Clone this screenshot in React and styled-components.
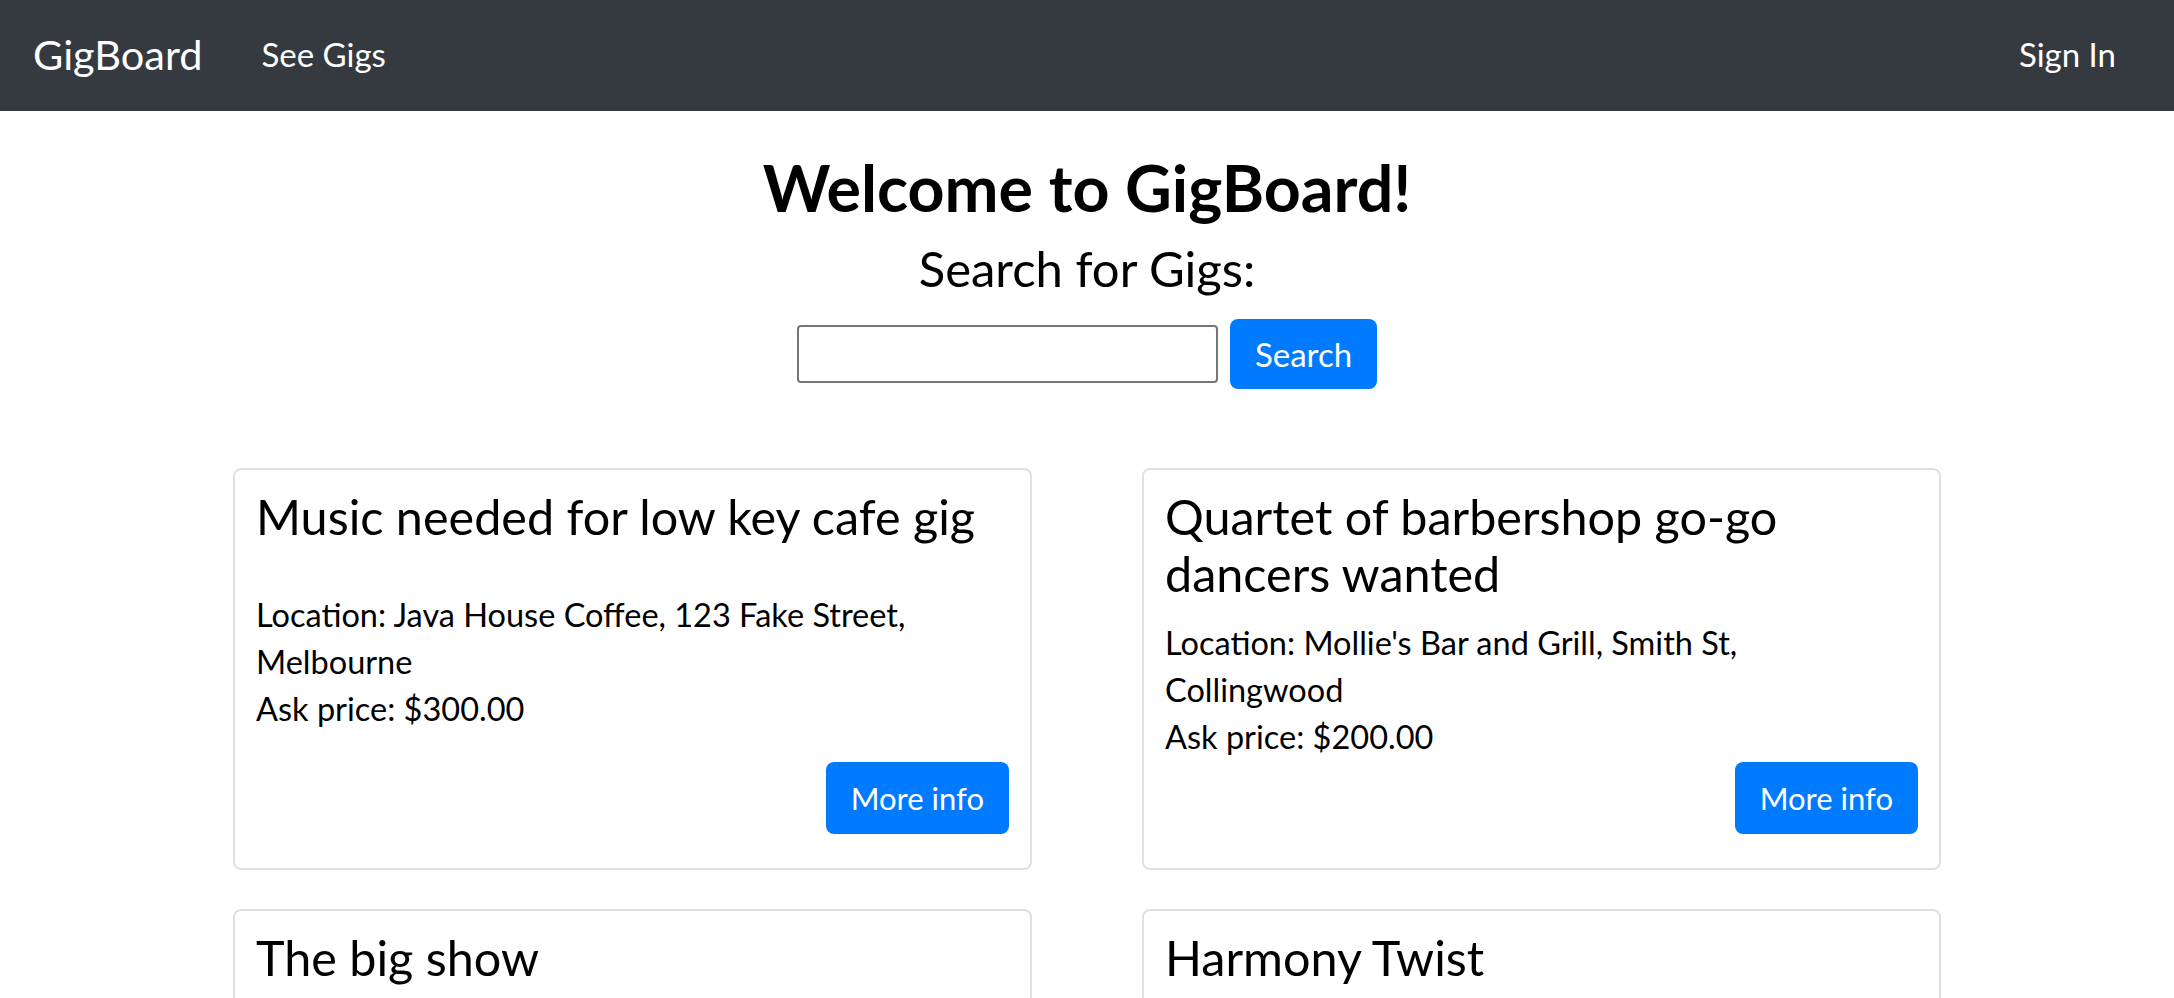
import React from 'react';
import styled, { createGlobalStyle } from 'styled-components';

const GlobalStyle = createGlobalStyle`
  body {
    margin: 0;
    background: #fff;
    font-family: Lato, "Noto Sans", sans-serif;
    color: #000;
  }
`;

const NavBar = styled.nav`
  height: 111px;
  background: #343a40;
  display: flex;
  align-items: center;
  padding: 0 58px 4px 33px;
  box-sizing: border-box;
`;

const Brand = styled.a`
  font-size: 41.5px;
  color: #fff;
  margin-right: 59px;
  text-decoration: none;
`;

const NavLink = styled.a`
  font-size: 33px;
  color: #fff;
  text-decoration: none;
  margin-left: ${props => (props.right ? 'auto' : '0')};
`;

const Hero = styled.header`
  display: flex;
  flex-direction: column;
  align-items: center;
  padding-top: 36px;
`;

const Title = styled.h1`
  margin: 0;
  font-size: 64.5px;
  font-weight: 700;
  line-height: 80px;
`;

const SubTitle = styled.h4`
  margin: 12px 0 0;
  font-size: 49px;
  font-weight: 400;
  line-height: 58px;
`;

const SearchRow = styled.form`
  display: flex;
  align-items: center;
  gap: 12px;
  margin-top: 22px;
`;

const SearchInput = styled.input`
  width: 421px;
  height: 58px;
  box-sizing: border-box;
  border: 2px solid #767676;
  border-radius: 4px;
  font-size: 28px;
`;

const BlueButton = styled.button`
  background: #007bff;
  color: #fff;
  border: none;
  border-radius: 8px;
  font-family: inherit;
  font-size: ${props => props.size || 33}px;
  height: ${props => props.h || 70}px;
  padding: 0 25px;
  cursor: pointer;
`;

const CardGrid = styled.main`
  display: grid;
  grid-template-columns: 799px 799px;
  column-gap: 110px;
  row-gap: 39px;
  justify-content: center;
  margin-top: 79px;
`;

const Card = styled.section`
  border: 2px solid #e0e0e0;
  border-radius: 8px;
  padding: 18px 21px 34px;
  display: flex;
  flex-direction: column;
  justify-content: space-between;
  min-height: 398px;
  box-sizing: border-box;
`;

const CardTitle = styled.h5`
  margin: 0 0 17px;
  font-size: 48.5px;
  font-weight: 400;
  line-height: 57px;
`;

const Info = styled.div`
  font-size: 32.5px;
  line-height: 47px;
`;

const ButtonRow = styled.div`
  display: flex;
  justify-content: flex-end;
  margin-top: 2px;
`;

const gigs = [
  {
    title: 'Music needed for low key cafe gig',
    location: 'Java House Coffee, 123 Fake Street, Melbourne',
    price: '$300.00',
  },
  {
    title: 'Quartet of barbershop go-go dancers wanted',
    location: "Mollie's Bar and Grill, Smith St, Collingwood",
    price: '$200.00',
  },
  { title: 'The big show', location: 'Forum Theatre, Flinders St, Melbourne', price: '$500.00' },
  { title: 'Harmony Twist', location: 'The Corner Hotel, Richmond', price: '$250.00' },
];

const App = () => (
  <>
    <GlobalStyle />
    <NavBar>
      <Brand href="#">GigBoard</Brand>
      <NavLink href="#">See Gigs</NavLink>
      <NavLink href="#" right>Sign In</NavLink>
    </NavBar>
    <Hero>
      <Title>Welcome to GigBoard!</Title>
      <SubTitle>Search for Gigs:</SubTitle>
      <SearchRow onSubmit={e => e.preventDefault()}>
        <SearchInput type="text" />
        <BlueButton type="submit">Search</BlueButton>
      </SearchRow>
    </Hero>
    <CardGrid>
      {gigs.map(gig => (
        <Card key={gig.title}>
          <CardTitle>{gig.title}</CardTitle>
          <Info>
            Location: {gig.location}
            <br />
            Ask price: {gig.price}
          </Info>
          <ButtonRow>
            <BlueButton h={72} size={31}>More info</BlueButton>
          </ButtonRow>
        </Card>
      ))}
    </CardGrid>
  </>
);

export default App;
